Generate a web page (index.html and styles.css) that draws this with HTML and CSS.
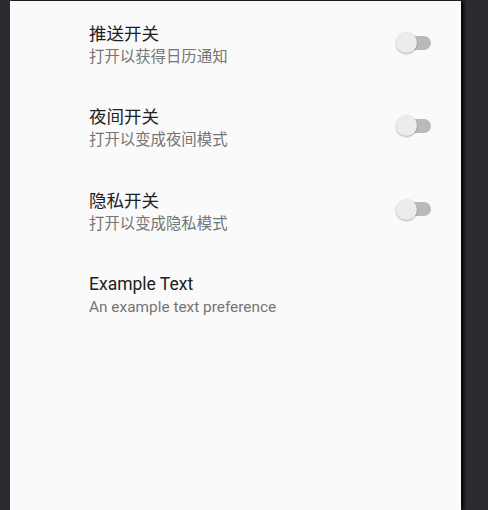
FILE: index.html
```html
<!DOCTYPE html>
<html lang="zh">
<head>
<meta charset="utf-8">
<link rel="stylesheet" href="styles.css">
</head>
<body>
<div class="panel">
  <div class="row">
    <div class="text">
      <div class="title">推送开关</div>
      <div class="summary">打开以获得日历通知</div>
    </div>
    <div class="switch"><span class="track"></span><span class="thumb"></span></div>
  </div>
  <div class="row">
    <div class="text">
      <div class="title">夜间开关</div>
      <div class="summary">打开以变成夜间模式</div>
    </div>
    <div class="switch"><span class="track"></span><span class="thumb"></span></div>
  </div>
  <div class="row">
    <div class="text">
      <div class="title">隐私开关</div>
      <div class="summary">打开以变成隐私模式</div>
    </div>
    <div class="switch"><span class="track"></span><span class="thumb"></span></div>
  </div>
  <div class="row">
    <div class="text">
      <div class="title">Example Text</div>
      <div class="summary">An example text preference</div>
    </div>
  </div>
</div>
</body>
</html>
```
FILE: styles.css
```css
html, body {
  margin: 0;
  padding: 0;
  height: 100%;
  overflow: hidden;
}
body {
  background: #2b2c30;
  font-family: Roboto, "Noto Sans CJK SC", sans-serif;
}
.panel {
  margin: 1px 0 0 10px;
  width: 451px;
  height: 509px;
  background: #fafafa;
  box-shadow: 3px 0 3px rgba(0, 0, 0, 0.85);
}
.row {
  box-sizing: border-box;
  height: 83.3px;
  padding: 21px 30px 0 79px;
  display: flex;
  justify-content: space-between;
  align-items: flex-start;
}
.title {
  font-size: 17.5px;
  line-height: 24px;
  color: #212121;
}
.summary {
  font-size: 15.4px;
  line-height: 22px;
  color: #757575;
}
.switch {
  position: relative;
  width: 35px;
  height: 21px;
  margin-top: 10px;
}
.track {
  position: absolute;
  left: 1px;
  top: 3.5px;
  width: 34px;
  height: 14px;
  border-radius: 7px;
  background: #bababa;
}
.thumb {
  position: absolute;
  left: 0;
  top: 0;
  width: 21px;
  height: 21px;
  border-radius: 50%;
  background: #ececec;
  box-shadow: 0 1px 2px rgba(0, 0, 0, 0.3);
}
```
